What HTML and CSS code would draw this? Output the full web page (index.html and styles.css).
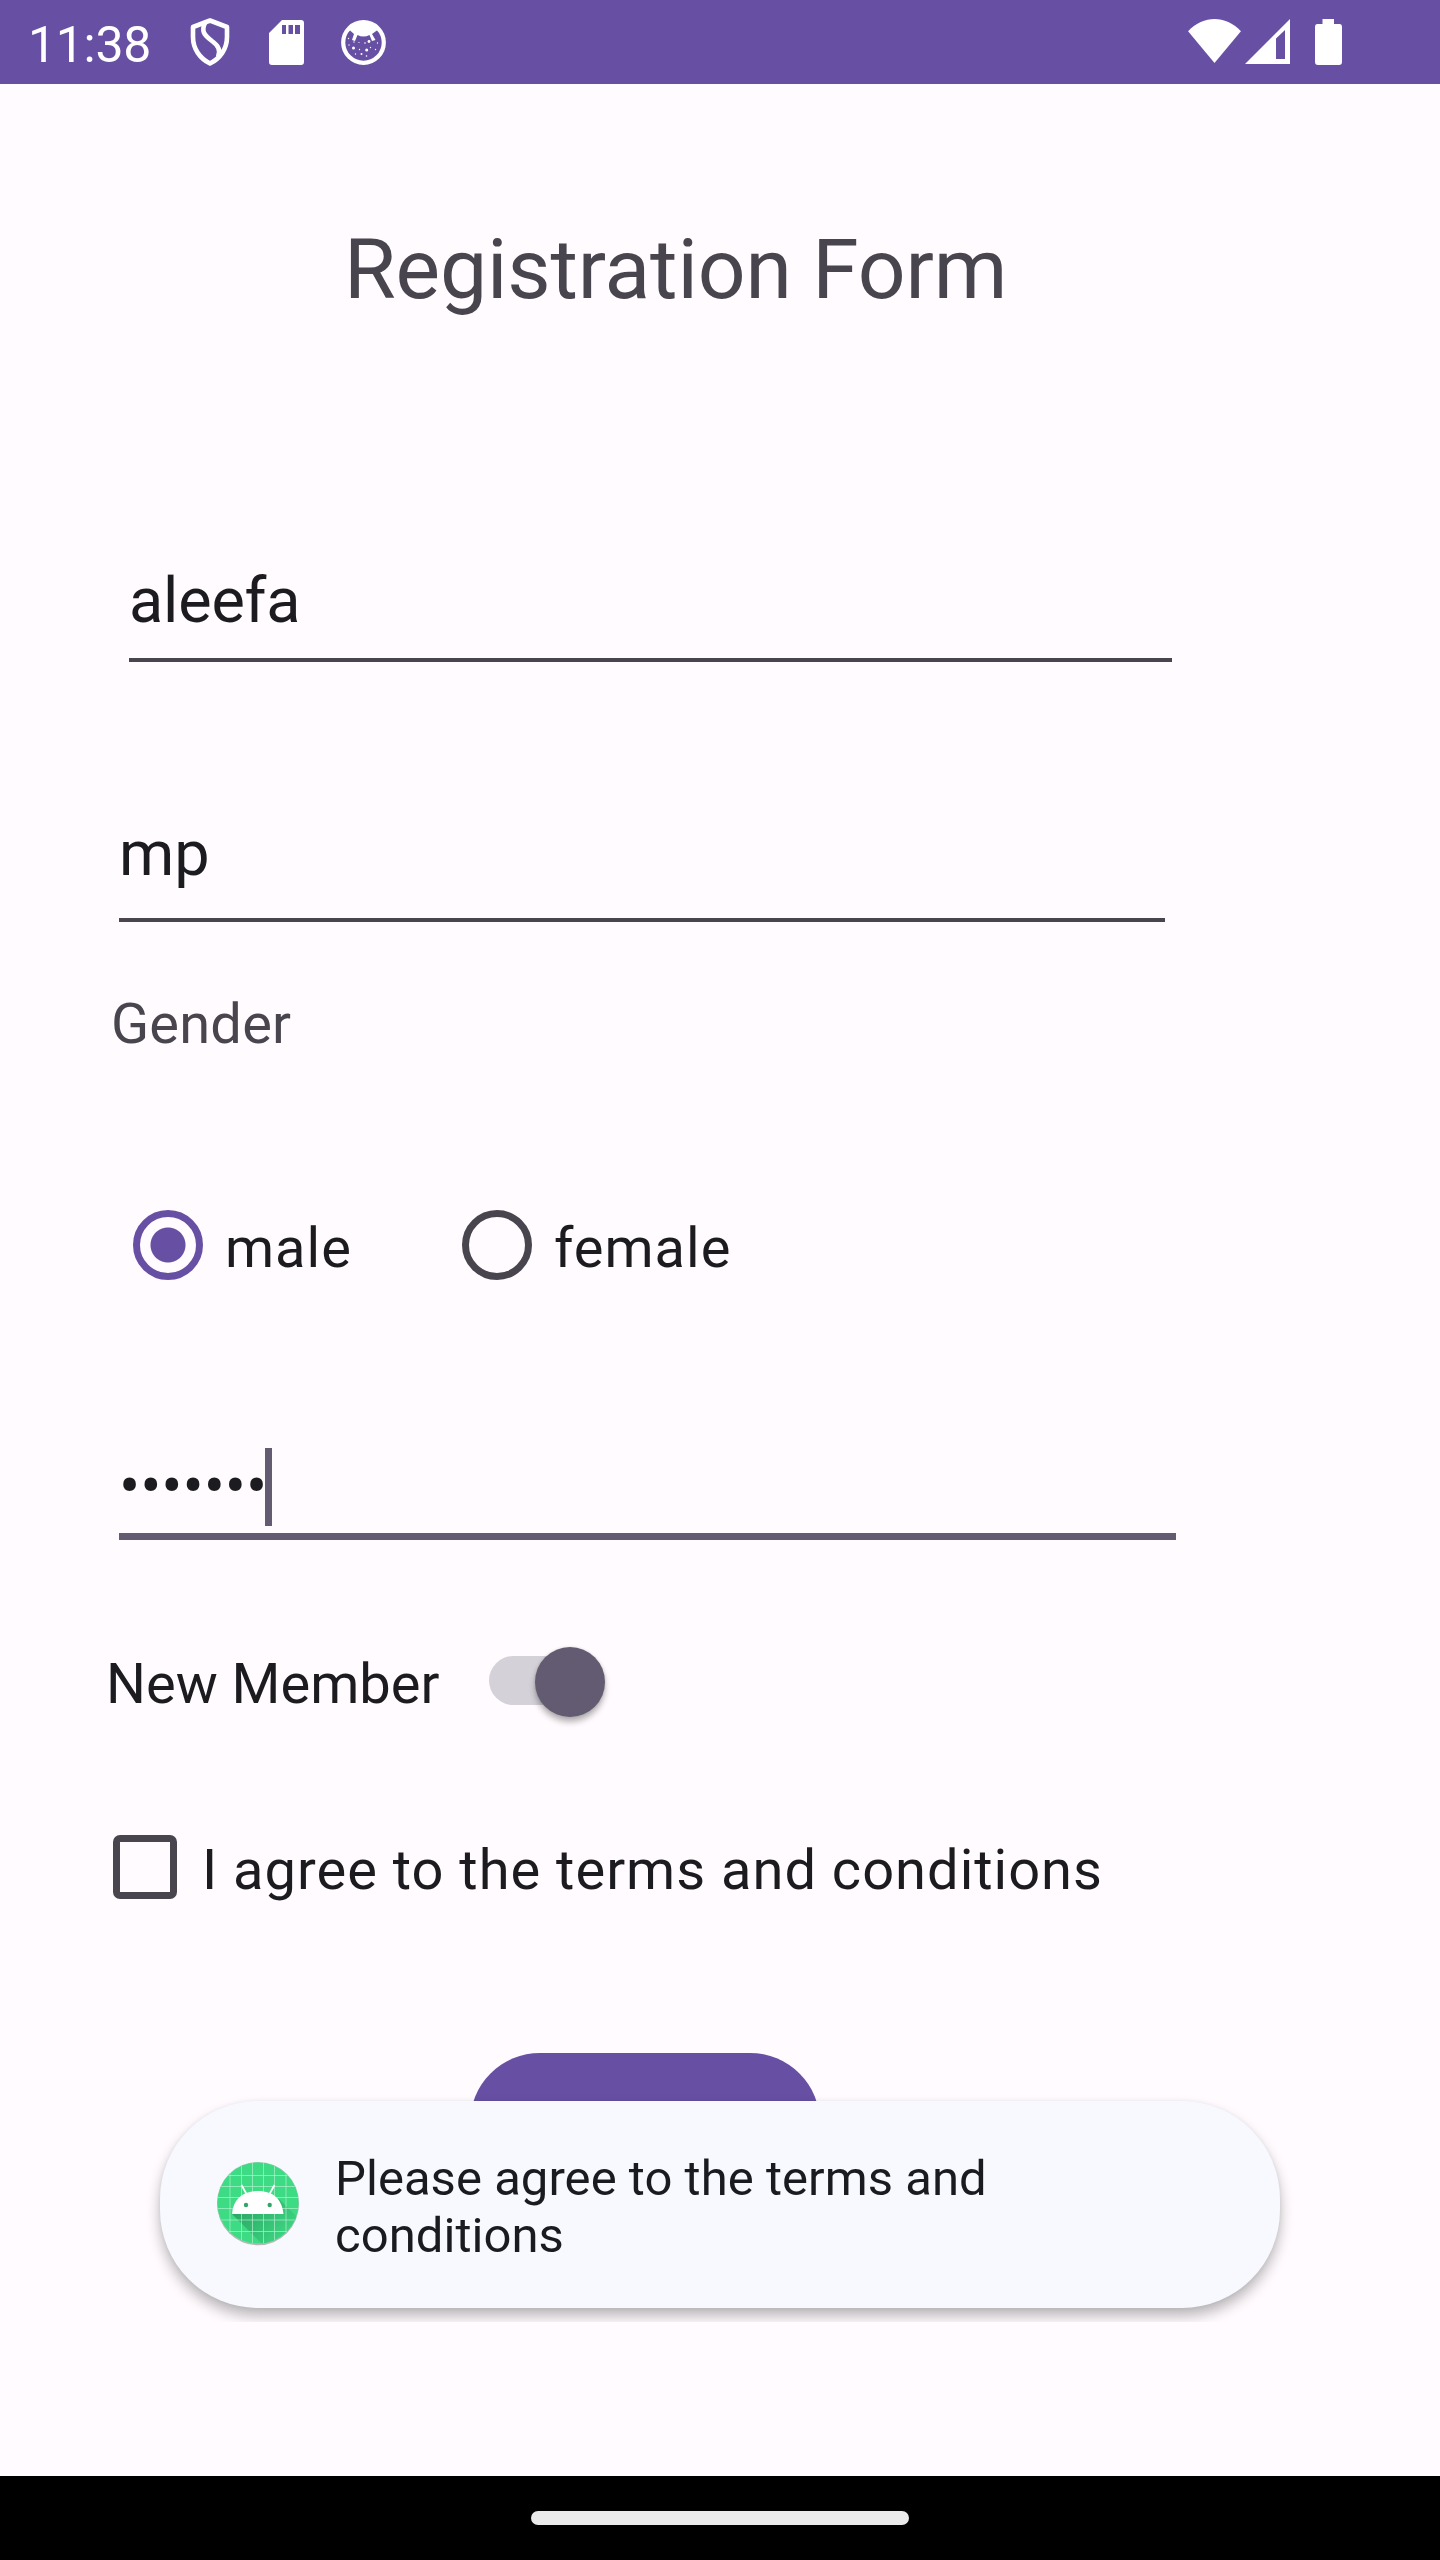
FILE: index.html
```html
<!DOCTYPE html>
<html lang="en">
<head>
<meta charset="utf-8">
<title>Registration Form</title>
<link rel="stylesheet" href="styles.css">
</head>
<body>
<header class="status-bar">
  <span class="clock">11:38</span>
  <svg class="shield" width="40" height="50" viewBox="0 0 40 50" fill="none" stroke="#fff" stroke-width="4.6" stroke-linejoin="round"><path d="M20 3.5 37 10V20C37 32 30 41.500 20 46.500 10 41.500 3 32 3 20V10Z"/><path d="M15 6C11 14 14 18 22 24 29 29 31 34 28 40"/></svg>
  <svg class="sd-card" width="35" height="45" viewBox="0 0 35 45"><path fill="#fff" fill-rule="evenodd" d="M13 0H32Q35 0 35 3V42Q35 45 32 45H3Q0 45 0 42V13ZM13 5V14H17V5ZM19.500 5V14H24V5ZM26 5V14H31V5Z"/></svg>
  <svg class="face" width="45" height="45" viewBox="0 0 45 45"><circle cx="22.500" cy="22.500" r="20.300" fill="none" stroke="#fff" stroke-width="4.200"/><path fill="#fff" d="M8.500 10Q13 2 22.500 2T36.500 10L31 14 34.500 20 31 21 28.500 15Q22.500 18 16.500 15L14 21 11 20 13 14Z"/><g fill="#fff"><circle cx="12.500" cy="28" r="1.500"/><circle cx="28" cy="21.500" r="1.400"/><circle cx="25.700" cy="30" r="1.500"/><circle cx="20.500" cy="34" r="1"/><circle cx="18.500" cy="29.500" r=".7"/><circle cx="7.500" cy="18.500" r=".7"/><circle cx="13" cy="22" r=".7"/><circle cx="18" cy="22.500" r=".6"/><circle cx="24" cy="23" r=".8"/><circle cx="8" cy="25" r=".7"/><circle cx="29.500" cy="27.500" r=".7"/><circle cx="34.500" cy="29.500" r=".7"/><circle cx="36.500" cy="23" r=".7"/><circle cx="14.500" cy="34" r=".7"/><circle cx="25.500" cy="36" r=".8"/></g></svg>
  <svg class="wifi" width="53" height="45" viewBox="0 0 54 46"><path fill="#fff" d="M27 45 0 12.500C16-4 38-4 54 12.500Z"/></svg>
  <svg class="signal" width="45" height="45" viewBox="0 0 45 45"><path fill="#fff" fill-rule="evenodd" d="M0 45 45 0V45ZM31 19.500V40H40V11Z"/></svg>
  <svg class="battery" width="27" height="46" viewBox="0 0 27 46"><path fill="#fff" d="M7.500 0H19V5H24.500Q27 5 27 8V43Q27 46 24 46H3Q0 46 0 43V8Q0 5 2.500 5H7.500Z"/></svg>
</header>
<main class="form">
  <h1 class="title">Registration Form</h1>
  <div class="field field-first">aleefa</div>
  <div class="field field-last">mp</div>
  <div class="gender-label">Gender</div>
  <div class="radios">
    <span class="radio checked"></span><span class="option male">male</span>
    <span class="radio"></span><span class="option">female</span>
  </div>
  <div class="field field-password"><span class="dots">•••••••</span><i class="caret"></i></div>
  <div class="member"><span>New Member</span><span class="track"><i class="thumb"></i></span></div>
  <div class="terms"><span class="checkbox"></span><span class="option">I agree to the terms and conditions</span></div>
  <div class="submit"></div>
</main>
<div class="toast-area">
  <div class="toast">
    <svg class="android" width="86" height="86" viewBox="0 0 86 86">
      <defs>
        <clipPath id="disc"><circle cx="43" cy="43" r="40.500"/></clipPath>
        <linearGradient id="shade" gradientUnits="userSpaceOnUse" x1="30" y1="45" x2="68" y2="83"><stop offset="0" stop-color="#2da866"/><stop offset="1" stop-color="#3dd883"/></linearGradient>
      </defs>
      <circle cx="43" cy="44.500" r="40.800" fill="#b5b7bb"/>
      <circle cx="43" cy="43" r="41" fill="#9fc9b1"/>
      <g clip-path="url(#disc)">
        <path fill="#3ddc84" d="M0 0H86V86H0Z"/>
        <path fill="url(#shade)" d="M17 54 49 86H86V61L64 39Z"/>
        <path stroke="#b9f3d2" stroke-opacity=".65" stroke-width="1" d="M15 0V86M26.500 0V86M37.500 0V86M48.500 0V86M59.500 0V86M71 0V86M0 15.500H86M0 26.500H86M0 37.500H86M0 48.500H86M0 60H86M0 71.500H86"/>
        <path fill="#fff" d="M17 54C18 40 27 31 43 31S67 40 68.500 54Z"/>
        <path stroke="#fff" stroke-width="1.800" d="M26.500 25 32 35M59.500 25 54 35"/>
        <circle cx="31" cy="45" r="2.200" fill="#34a569"/><circle cx="54.700" cy="45" r="2.200" fill="#34a569"/>
      </g>
    </svg>
    <p class="message">Please agree to the terms and conditions</p>
  </div>
</div>
<footer class="nav-bar"><span class="handle"></span></footer>
</body>
</html>
```
FILE: styles.css
```css
* { box-sizing: border-box; }
body {
  margin: 0;
  width: 1440px;
  height: 2560px;
  position: relative;
  display: flex;
  flex-direction: column;
  overflow: hidden;
  background: #fffbfe;
  color: #1c1b1f;
  font-family: Roboto, sans-serif;
}
.status-bar {
  height: 84px;
  flex: none;
  display: flex;
  align-items: flex-start;
  padding-left: 28px;
  background: #6750a4;
  color: #fff;
}
.status-bar svg { flex: none; overflow: visible; }
.clock { width: 161.500px; font-size: 50px; line-height: 58px; padding-top: 16px; letter-spacing: -0.3px; }
.shield { margin-top: 17px; }
.sd-card { margin: 20px 0 0 39.500px; }
.face { margin: 20px 0 0 37px; }
.wifi { margin: 19px 0 0 802px; }
.signal { margin: 19px 0 0 4px; }
.battery { margin: 19px 0 0 25px; }

.form { flex: 1; display: flex; flex-direction: column; align-items: flex-start; }
.title {
  margin: 137px 0 0 344px;
  font-size: 84px;
  font-weight: 400;
  line-height: 98px;
  letter-spacing: -0.15px;
  color: #49454f;
  white-space: nowrap;
}
.field { font-size: 63px; line-height: 74px; border-bottom: 4px solid #49454f; }
.field-first { margin: 245px 0 0 129px; width: 1043px; height: 98px; letter-spacing: -0.2px; }
.field-last { margin: 155px 0 0 119px; width: 1046px; height: 105px; }
.gender-label { margin: 69px 0 0 111px; font-size: 56px; line-height: 66px; letter-spacing: 0.2px; color: #49454f; }
.radios { display: flex; align-items: flex-start; margin: 153px 0 0 133px; height: 70px; }
.radio { width: 70px; height: 70px; border: 7px solid #49454f; border-radius: 50%; flex: none; }
.radio.checked { border-color: #6750a4; background: radial-gradient(circle, #6750a4 17px, transparent 18px); }
.option { font-size: 56px; line-height: 66px; letter-spacing: 1px; white-space: nowrap; margin: 5px 0 0 22px; }
.male { width: 237px; }
.field-password { display: flex; margin: 168px 0 0 119px; width: 1057px; height: 92px; border-bottom: 7px solid #625b71; }
.dots { padding-top: 2px; letter-spacing: -0.1px; }
.caret { width: 7px; height: 78px; margin-left: -2px; background: #625b71; }
.member { display: flex; margin: 106px 0 0 106px; height: 71px; font-size: 56px; line-height: 66px; }
.member > span:first-child { width: 383px; padding-top: 5px; white-space: nowrap; }
.track { width: 112px; height: 49px; margin-top: 10px; border-radius: 25px; background: #d4d1d8; }
.thumb { display: block; width: 70px; height: 70px; margin: -9px 0 0 45.500px; border-radius: 50%; background: #625b71; box-shadow: 0 5px 6px rgba(0,0,0,.3), 0 0 3px rgba(0,0,0,.12); }
.terms { display: flex; margin: 118px 0 0 113px; height: 64px; }
.checkbox { width: 64px; height: 64px; border: 7px solid #49454f; border-radius: 7px; flex: none; }
.terms .option { margin: 2px 0 0 25px; }
.submit { width: 350px; height: 140px; margin: 154px 0 0 470px; border-radius: 70px; background: #6750a4; }

.toast-area { position: absolute; left: 146px; top: 2087px; width: 1148px; height: 235px; padding: 14px; overflow: hidden; }
.toast {
  display: flex;
  width: 1120px;
  height: 207px;
  border-radius: 98px;
  background: #f8f9fe;
  box-shadow: 0 8px 14px rgba(0,0,0,.28), 0 0 4px rgba(0,0,0,.05);
}
.android { flex: none; margin: 59px 0 0 55px; }
.message { width: 750px; margin: 49px 0 0 34px; font-size: 49px; line-height: 57px; letter-spacing: 0.04px; color: #1a1b20; }

.nav-bar { height: 84px; flex: none; display: flex; justify-content: center; align-items: flex-start; padding-top: 35px; background: #000; }
.handle { width: 378px; height: 14px; border-radius: 7px; background: #ebebeb; }
```
